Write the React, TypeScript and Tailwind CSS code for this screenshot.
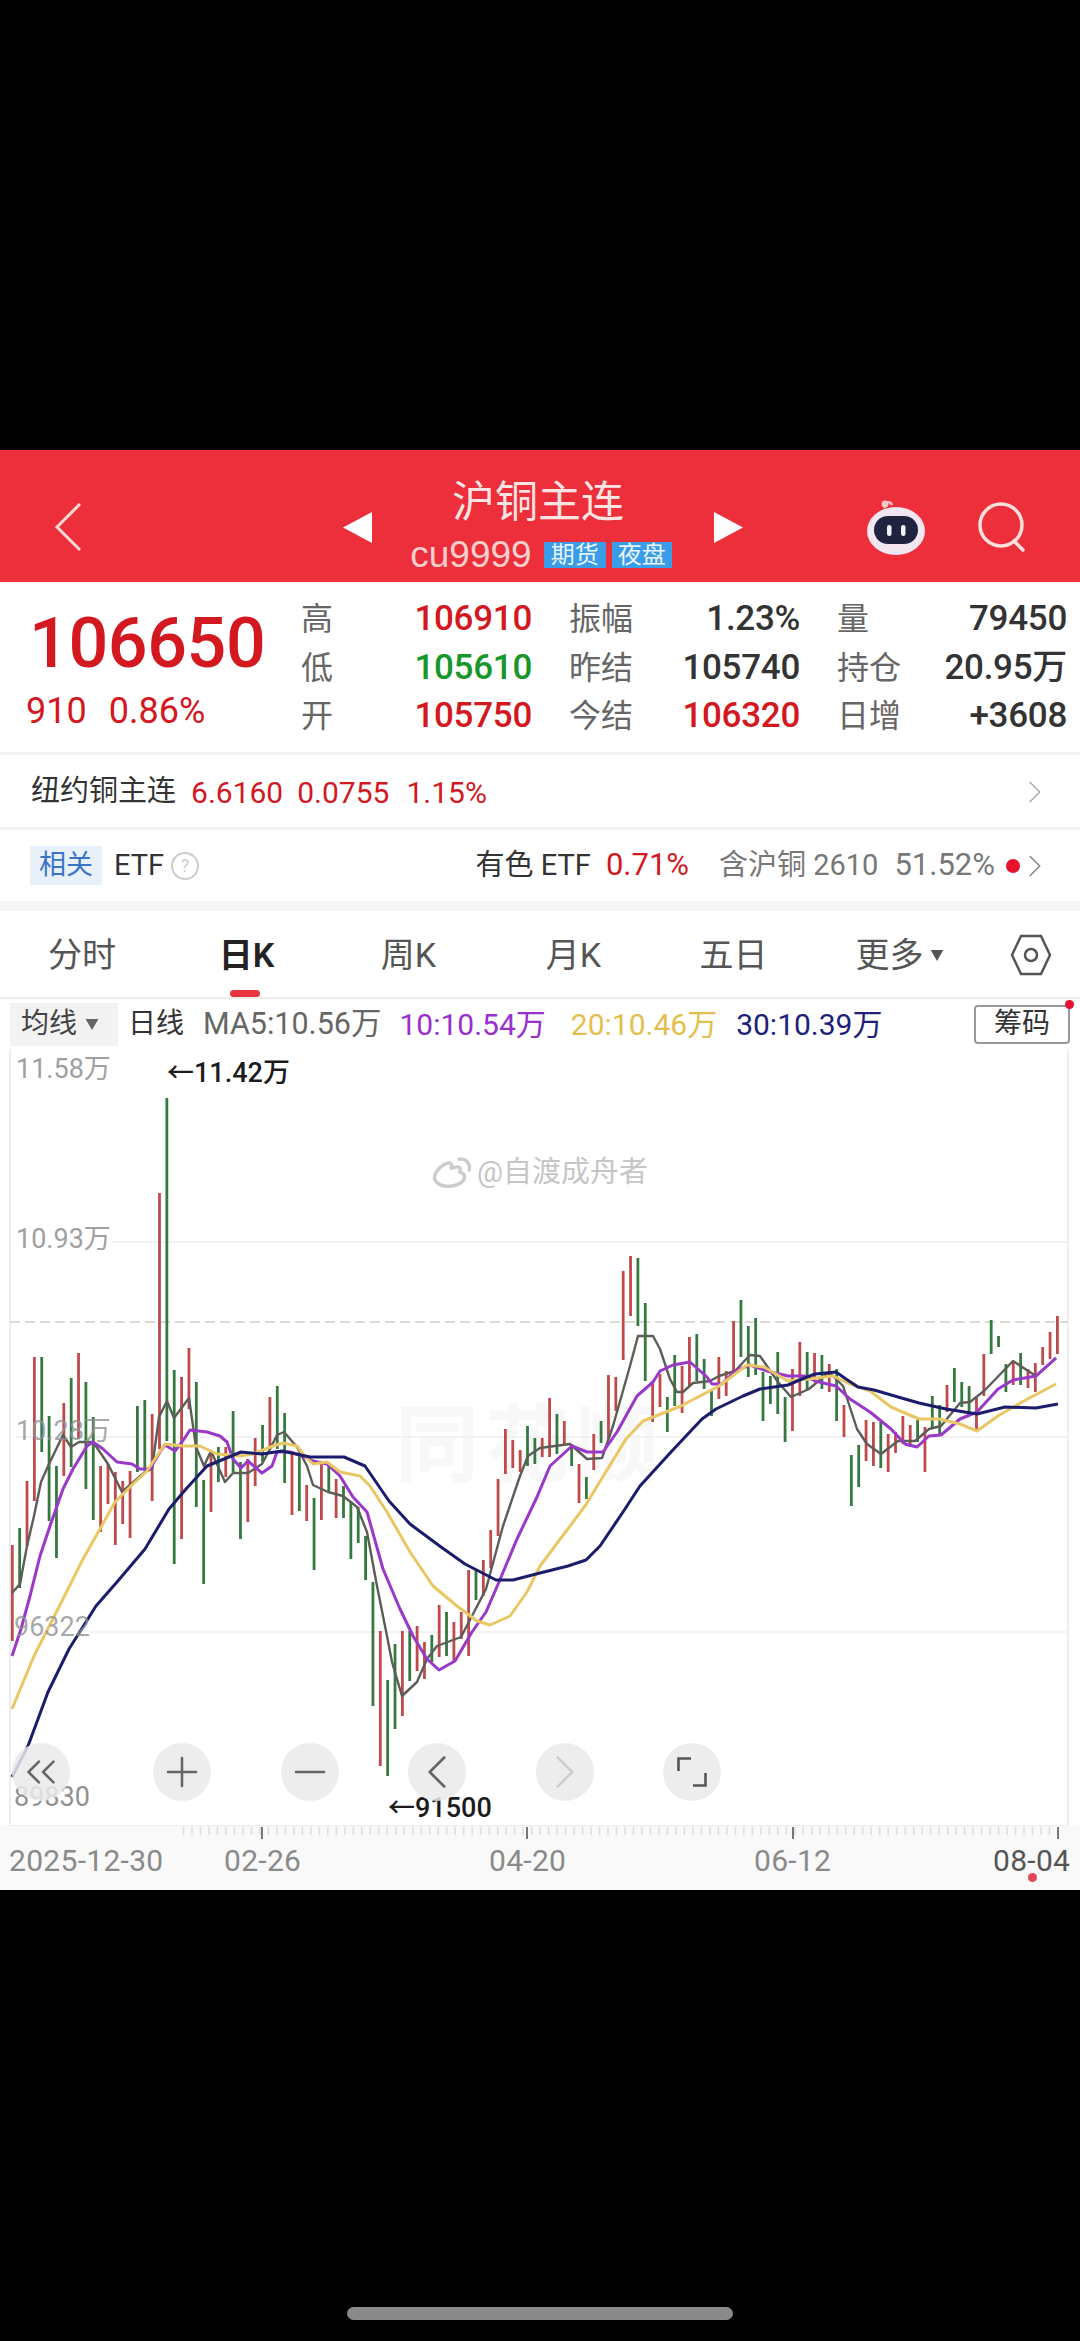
import React from "react";
import { ChevronLeft, ChevronRight, ChevronsLeft, Plus, Minus } from "lucide-react";
import { RiWeiboLine } from "react-icons/ri";

const font = "font-['Roboto','Noto_Sans_CJK_SC',sans-serif]";
const RED = "text-[#d3181f]";
const GREEN = "text-[#17962a]";
const DARK = "text-[#333333]";
const GRAY = "text-[#666666]";

// x = 12.3 + 7.36 * index, one [colour, top, bottom] for each day
const bars: Array<[string, number, number]> = [
  ["r", 1546, 1642], ["g", 1529, 1589], ["r", 1482, 1547], ["r", 1358, 1502], ["g", 1358, 1453],
  ["g", 1417, 1522], ["g", 1467, 1559], ["r", 1404, 1477], ["g", 1379, 1468], ["r", 1354, 1440],
  ["g", 1383, 1490], ["g", 1418, 1521], ["r", 1467, 1533], ["r", 1465, 1505], ["r", 1473, 1546],
  ["r", 1482, 1525], ["r", 1472, 1539], ["g", 1407, 1473], ["g", 1401, 1472], ["r", 1415, 1502],
  ["r", 1194, 1450], ["g", 1099, 1442], ["g", 1371, 1565], ["r", 1378, 1540], ["r", 1349, 1410],
  ["g", 1383, 1508], ["g", 1481, 1585], ["r", 1453, 1513], ["g", 1448, 1483], ["r", 1448, 1478],
  ["g", 1412, 1473], ["g", 1463, 1540], ["r", 1460, 1523], ["r", 1439, 1487], ["g", 1426, 1463],
  ["r", 1398, 1450], ["g", 1387, 1450], ["g", 1414, 1484], ["r", 1452, 1516], ["g", 1455, 1512],
  ["r", 1486, 1522], ["g", 1499, 1571], ["r", 1463, 1521], ["g", 1467, 1492], ["r", 1480, 1519],
  ["g", 1487, 1519], ["g", 1502, 1560], ["g", 1508, 1544], ["g", 1537, 1581], ["g", 1583, 1707],
  ["r", 1632, 1767], ["g", 1681, 1777], ["g", 1645, 1730], ["r", 1632, 1717], ["g", 1632, 1682],
  ["r", 1627, 1672], ["r", 1643, 1680], ["g", 1636, 1663], ["r", 1606, 1658], ["g", 1613, 1657],
  ["r", 1623, 1663], ["r", 1613, 1640], ["r", 1571, 1657], ["g", 1570, 1601], ["r", 1561, 1597],
  ["r", 1531, 1569], ["r", 1480, 1537], ["r", 1430, 1475], ["r", 1441, 1469], ["r", 1451, 1473],
  ["g", 1427, 1467], ["g", 1439, 1465], ["r", 1439, 1458], ["r", 1399, 1458], ["g", 1415, 1455],
  ["r", 1422, 1447], ["g", 1445, 1467], ["r", 1465, 1504], ["g", 1478, 1500], ["r", 1435, 1471],
  ["g", 1422, 1444], ["r", 1376, 1440], ["r", 1378, 1412], ["r", 1272, 1361], ["r", 1257, 1317],
  ["g", 1259, 1327], ["g", 1304, 1382], ["r", 1383, 1423], ["r", 1375, 1408], ["g", 1398, 1433],
  ["g", 1356, 1407], ["r", 1367, 1414], ["r", 1338, 1387], ["g", 1335, 1382], ["g", 1360, 1390],
  ["g", 1390, 1417], ["r", 1358, 1400], ["r", 1372, 1397], ["r", 1322, 1373], ["g", 1301, 1358],
  ["g", 1327, 1378], ["g", 1319, 1376], ["g", 1373, 1422], ["g", 1377, 1405], ["g", 1353, 1415],
  ["g", 1398, 1443], ["r", 1370, 1432], ["r", 1343, 1397], ["g", 1353, 1390], ["r", 1354, 1380],
  ["g", 1356, 1390], ["r", 1365, 1393], ["g", 1370, 1422], ["r", 1406, 1438], ["g", 1456, 1507],
  ["g", 1446, 1488], ["r", 1421, 1462], ["r", 1423, 1467], ["g", 1423, 1469], ["r", 1435, 1473],
  ["r", 1433, 1454], ["r", 1417, 1445], ["r", 1426, 1448], ["g", 1421, 1443], ["r", 1428, 1473],
  ["g", 1397, 1430], ["g", 1406, 1437], ["r", 1386, 1413], ["g", 1369, 1403], ["g", 1383, 1408],
  ["g", 1387, 1417], ["r", 1398, 1432], ["r", 1355, 1397], ["g", 1321, 1355], ["g", 1337, 1348],
  ["g", 1365, 1393], ["r", 1362, 1386], ["g", 1354, 1386], ["r", 1370, 1389], ["r", 1364, 1393],
  ["r", 1348, 1366], ["r", 1333, 1360], ["r", 1317, 1355],
];

const ma5 =
  "12,1594 20,1585 27,1547 34,1517 41,1483 49,1465 63,1436 71,1448 79,1443 93,1443 108,1465 122,1493 130,1486 145,1473 152,1470 159,1418 167,1402 174,1419 189,1399 196,1448 204,1467 211,1452 225,1483 233,1474 248,1474 262,1465 270,1450 277,1436 284,1433 297,1448 307,1467 313,1486 328,1493 343,1497 357,1508 367,1533 377,1587 387,1637 392,1663 402,1697 417,1683 427,1660 437,1647 461,1638 472,1617 486,1590 503,1527 520,1477 528,1457 540,1449 570,1445 587,1460 602,1459 613,1427 630,1367 638,1337 653,1337 660,1350 670,1380 677,1393 683,1393 693,1384 710,1382 719,1377 735,1372 750,1356 760,1357 778,1383 791,1398 809,1390 829,1373 843,1387 857,1430 867,1445 881,1455 898,1442 915,1442 929,1430 941,1427 960,1404 970,1403 984,1392 1013,1362 1036,1377 1056,1359";
const ma10 =
  "12,1657 21,1630 30,1597 40,1557 50,1527 63,1490 73,1470 87,1447 93,1443 103,1450 117,1463 132,1465 140,1470 150,1470 160,1453 165,1446 175,1452 182,1443 190,1431 207,1433 220,1437 227,1443 233,1460 241,1469 248,1462 262,1474 272,1467 277,1453 290,1453 303,1457 313,1462 327,1465 340,1477 353,1498 367,1513 383,1570 400,1610 413,1637 427,1660 439,1671 455,1662 472,1633 486,1613 499,1583 517,1540 537,1498 550,1467 572,1447 587,1453 603,1453 617,1433 637,1397 653,1383 660,1372 673,1366 690,1363 707,1378 712,1385 722,1385 735,1372 750,1366 767,1372 788,1377 805,1377 815,1382 836,1387 850,1400 870,1413 891,1430 905,1445 917,1448 929,1437 941,1436 960,1420 977,1413 998,1390 1013,1381 1036,1377 1056,1359";
const ma20 =
  "12,1710 34,1657 63,1600 83,1560 100,1530 115,1503 133,1485 147,1472 157,1457 165,1445 183,1447 200,1447 217,1455 240,1457 253,1455 273,1447 283,1444 297,1447 303,1455 313,1465 327,1463 340,1473 360,1477 370,1487 387,1513 410,1553 433,1587 457,1607 477,1622 490,1626 510,1617 527,1593 540,1567 585,1507 626,1440 643,1422 681,1407 719,1387 747,1366 764,1368 788,1382 809,1380 833,1377 850,1385 870,1392 891,1408 919,1420 939,1420 960,1425 977,1432 998,1417 1022,1403 1056,1385";
const ma30 =
  "12,1778 28,1747 48,1693 69,1650 96,1607 117,1583 145,1550 169,1510 186,1490 207,1467 241,1453 262,1455 282,1452 310,1458 344,1458 365,1467 389,1502 410,1525 441,1548 465,1565 496,1581 513,1581 540,1574 568,1567 586,1561 600,1547 623,1513 640,1487 671,1453 702,1420 716,1410 743,1397 760,1390 788,1386 802,1380 815,1375 836,1373 846,1380 858,1388 874,1391 898,1398 919,1404 946,1410 977,1415 1005,1408 1036,1409 1058,1405";

const ticks = Array.from({ length: 104 }, (_, i) => 1058 - i * 8.49);

const StatCell = ({ label, value, color }: { label: string; value: string; color: string }) => (
  <div className="flex items-center justify-between">
    <span className={`text-[32px] ${GRAY}`}>{label}</span>
    <span className={`text-[35px] font-medium tracking-[-0.3px] ${color}`}>{value}</span>
  </div>
);

const Stats = () => (
  <div className="flex h-[170px] bg-white">
    <div className="flex w-[301px] flex-col pl-[26px] pt-[13px]">
      <span className={`pl-[3px] text-[70px] leading-[96px] font-medium tracking-[-0.4px] ${RED}`}>106650</span>
      <div className={`mt-[-2px] flex gap-[22px] text-[36px] leading-[44px] ${RED}`}>
        <span>910</span>
        <span>0.86%</span>
      </div>
    </div>
    <div className="grid h-[146px] grid-cols-[231px_231px_230px] gap-x-[37px] pt-[13px] auto-rows-[48.5px]">
      <StatCell label="高" value="106910" color={RED} />
      <StatCell label="振幅" value="1.23%" color={DARK} />
      <StatCell label="量" value="79450" color={DARK} />
      <StatCell label="低" value="105610" color={GREEN} />
      <StatCell label="昨结" value="105740" color={DARK} />
      <StatCell label="持仓" value="20.95万" color={DARK} />
      <StatCell label="开" value="105750" color={RED} />
      <StatCell label="今结" value="106320" color={RED} />
      <StatCell label="日增" value="+3608" color={DARK} />
    </div>
  </div>
);

const Header = () => (
  <div className="grid h-[132px] grid-cols-[343px_29px_342px_29px_1fr] items-center bg-[#ec2f3b] pt-[22px] text-white">
    <svg viewBox="0 0 27 48" className="ml-[54px] h-[48px] w-[27px]" fill="none" stroke="#fbd9d6" strokeWidth="3">
      <path d="M26 1 3 24l23 23" />
    </svg>
    <svg viewBox="0 0 29 31" className="h-[31px] w-[29px]" fill="#ffffff">
      <polygon points="29,0 29,31 0,15.5" />
    </svg>
    <div className="flex flex-col items-center pr-[10px] pt-[3px]">
      <span className="text-[43px] leading-[40px] text-[#fde4e2]">沪铜主连</span>
      <div className="ml-[6px] mt-[13px] flex h-[40px] items-center gap-[6px]">
        <span className="mr-[6px] font-['Liberation_Sans',sans-serif] text-[37px] leading-[30px] text-[#f8cfcd]">cu9999</span>
        <span className="flex h-[26px] w-[62px] items-center justify-center bg-[#3a9be6] text-[24px] text-[#e9f5ff]">期货</span>
        <span className="flex h-[26px] w-[60px] items-center justify-center bg-[#3a9be6] text-[24px] text-[#e9f5ff]">夜盘</span>
      </div>
    </div>
    <svg viewBox="0 0 29 31" className="h-[31px] w-[29px]" fill="#ffffff">
      <polygon points="0,0 0,31 29,15.5" />
    </svg>
    <div className="flex items-center pl-[123px]">
      <svg viewBox="0 0 60 56" className="h-[56px] w-[60px]">
        <path d="M19 9c-3-6 5-8 7-3" fill="none" stroke="#f8c7c4" strokeWidth="2.5" />
        <circle cx="19" cy="5" r="3.5" fill="#f8c7c4" />
        <ellipse cx="30" cy="32" rx="29" ry="24" fill="#f3e6f0" />
        <rect x="8" y="17" width="44" height="28" rx="14" fill="#20233f" />
        <rect x="21" y="26" width="4.5" height="11" rx="2.2" fill="#f1f3fa" />
        <rect x="35" y="26" width="4.5" height="11" rx="2.2" fill="#f1f3fa" />
      </svg>
      <svg viewBox="0 0 50 50" className="ml-[51px] h-[50px] w-[50px]" fill="none" stroke="#fde0dc" strokeWidth="3.5">
        <circle cx="24" cy="23" r="21" />
        <path d="m37 39 9 9" strokeLinecap="round" />
      </svg>
    </div>
  </div>
);

const Rows = () => (
  <>
    <div className="flex h-[75px] items-center justify-between border-t-[3px] border-[#f3f3f3] bg-white pl-[31px] pr-[26px] pt-[2px]">
      <div className="flex items-center text-[30px]">
        <span className={`mr-[15px] text-[29px] ${DARK}`}>纽约铜主连</span>
        <span className={`mr-[14px] ${RED}`}>6.6160</span>
        <span className={`mr-[17px] ${RED}`}>0.0755</span>
        <span className={RED}>1.15%</span>
      </div>
      <ChevronRight className="h-[38px] w-[38px] text-[#aaaaaa]" strokeWidth={1} />
    </div>
    <div className="flex h-[74px] items-center justify-between border-t-[3px] border-[#f3f3f3] bg-white pl-[30px] pr-[26px]">
      <div className="flex items-center">
        <span className="flex h-[39px] w-[72px] items-center justify-center bg-[#e8f0fa] text-[27px] text-[#3a74c9]">相关</span>
        <span className={`ml-[12px] text-[29px] ${DARK}`}>ETF</span>
        <span className="ml-[7px] flex h-[28px] w-[28px] items-center justify-center rounded-full border-2 border-[#cccccc] text-[18px] text-[#cccccc]">?</span>
      </div>
      <div className="flex items-center text-[29px]">
        <span className={`mr-[15px] ${DARK}`}>有色 ETF</span>
        <span className={`mr-[30px] text-[31px] ${RED}`}>0.71%</span>
        <span className="mr-[16px] text-[#777777]">含沪铜 2610</span>
        <span className="text-[31px] text-[#777777]">51.52%</span>
        <span className="ml-[11px] h-[14px] w-[14px] rounded-full bg-[#e8112d]" />
        <ChevronRight className="ml-[-4px] h-[38px] w-[38px] text-[#888888]" strokeWidth={1} />
      </div>
    </div>
    <div className="h-[10px] bg-[#f5f5f5]" />
  </>
);

const Tabs = () => (
  <div className="grid h-[88px] grid-cols-[164px_165px_159px_171px_149px_183px_80px] border-b-2 border-[#eeeeee] bg-white pt-[2px] text-[34px] text-[#555555]">
    <div className="flex items-center justify-center">分时</div>
    <div className="relative flex items-center justify-center font-semibold text-[#222222]">
      日K
      <span className="absolute bottom-0 left-[66px] h-[7px] w-[30px] rounded-full bg-[#e8343f]" />
    </div>
    <div className="flex items-center justify-center">周K</div>
    <div className="flex items-center justify-center">月K</div>
    <div className="flex items-center justify-center">五日</div>
    <div className="flex items-center justify-center gap-[6px]">
      更多
      <svg viewBox="0 0 16 14" className="h-[11px] w-[14px]" fill="#555555">
        <polygon points="0,0 16,0 8,14" />
      </svg>
    </div>
    <div className="flex items-center justify-center">
      <svg viewBox="0 0 42 42" className="h-[42px] w-[42px]" fill="none" stroke="#555555" strokeWidth="2.5">
        <polygon points="11,2 31,2 40,21 31,40 11,40 2,21" />
        <circle cx="21" cy="21" r="6" />
      </svg>
    </div>
  </div>
);

const MaRow = () => (
  <div className="relative flex h-[50px] items-center bg-white pl-[10px] pr-[10px] text-[30px]">
    <div className="flex h-[43px] w-[108px] items-center gap-[8px] bg-[#f2f2f2] pl-[11px] text-[28px] text-[#444444]">
      均线
      <svg viewBox="0 0 14 12" className="h-[11px] w-[14px]" fill="#666666">
        <polygon points="0,0 14,0 7,12" />
      </svg>
    </div>
    <span className={`ml-[10px] text-[28px] ${DARK}`}>日线</span>
    <span className="ml-[19px] text-[30.5px] text-[#666666]">MA5:10.56万</span>
    <span className="ml-[18px] text-[#9a2fd0]">10:10.54万</span>
    <span className="ml-[25px] text-[#e5bf4e]">20:10.46万</span>
    <span className="ml-[19px] text-[#1d1f7a]">30:10.39万</span>
    <span className="ml-auto flex h-[39px] w-[96px] items-center justify-center rounded-[4px] border-2 border-[#999999] text-[28px] text-[#333333]">筹码</span>
    <span className="absolute right-[6px] top-[1px] h-[9px] w-[9px] rounded-full bg-[#e8112d]" />
  </div>
);

const Round = ({ left, children }: { left: string; children: React.ReactNode }) => (
  <div className={`absolute top-[694px] flex h-[58px] w-[58px] items-center justify-center rounded-full bg-[#eaeaea]/85 ${left}`}>
    {children}
  </div>
);

const Chart = () => (
  <div className={`relative h-[777px] bg-white ${font}`}>
    <span className="absolute left-[395px] top-[335px] text-[84px] font-bold tracking-[6px] text-[#f8f8f8]">同花顺</span>

    <svg viewBox="0 1050 1080 777" className="absolute inset-0 h-[777px] w-[1080px]" fill="none">
      <path d="M10 1050V1827M1068 1050V1827M10 1827H1068" stroke="#eeeeee" strokeWidth="2" />
      <path d="M112 1243H1068M16 1438H1068M90 1633H1068" stroke="#eeeeee" strokeWidth="1.5" />
      <path d="M10 1323H1068" stroke="#cfcfc4" strokeWidth="1.5" strokeDasharray="10 5" />
      {bars.map(([c, top, bottom], i) => (
        <line
          key={i}
          x1={12.3 + 7.36 * i}
          x2={12.3 + 7.36 * i}
          y1={top}
          y2={bottom}
          stroke={c === "r" ? "#bf4a4c" : "#35793f"}
          strokeWidth="2.8"
        />
      ))}
      <polyline points={ma5} stroke="#5d5d58" strokeWidth="2.4" strokeLinejoin="round" />
      <polyline points={ma10} stroke="#9a38c9" strokeWidth="3" strokeLinejoin="round" />
      <polyline points={ma20} stroke="#eac765" strokeWidth="3" strokeLinejoin="round" />
      <polyline points={ma30} stroke="#1c1c6c" strokeWidth="3" strokeLinejoin="round" />
    </svg>

    <span className="absolute left-[16px] top-[2px] text-[27px] leading-[36px] text-[#a0a0a0]">11.58万</span>
    <span className="absolute left-[16px] top-[172px] text-[27px] leading-[36px] text-[#a0a0a0]">10.93万</span>
    <span className="absolute left-[16px] top-[364px] text-[27px] leading-[36px] text-[#909090]/80">10.28万</span>
    <span className="absolute left-[14px] top-[560px] text-[27px] leading-[36px] text-[#909090]/80">96322</span>
    <span className="absolute left-[14px] top-[730px] text-[27px] leading-[36px] text-[#909090]">89830</span>

    <span className="absolute left-[167px] top-[6px] text-[27px] leading-[36px] font-medium text-[#1c1c1c]">←11.42万</span>
    <span className="absolute left-[388px] top-[741px] text-[27px] leading-[36px] font-medium text-[#1c1c1c]">←91500</span>

    <div className="absolute left-[431px] top-[102px] flex items-center gap-[4px] text-[29px] text-[#c6c6c6]">
      <RiWeiboLine className="h-[42px] w-[42px] text-[#cccccc]" />
      @自渡成舟者
    </div>

    <Round left="left-[12px]">
      <ChevronsLeft className="h-[50px] w-[50px] shrink-0 text-[#666666]" strokeWidth={1.2} />
    </Round>
    <Round left="left-[153px]">
      <Plus className="h-[48px] w-[48px] shrink-0 text-[#666666]" strokeWidth={1.3} />
    </Round>
    <Round left="left-[281px]">
      <Minus className="h-[48px] w-[48px] shrink-0 text-[#666666]" strokeWidth={1.3} />
    </Round>
    <Round left="left-[408px]">
      <ChevronLeft className="h-[58px] w-[58px] shrink-0 text-[#666666]" strokeWidth={1.1} />
    </Round>
    <Round left="left-[536px]">
      <ChevronRight className="h-[58px] w-[58px] shrink-0 text-[#cfcfcf]" strokeWidth={1.1} />
    </Round>
    <Round left="left-[663px]">
      <svg viewBox="0 0 30 30" className="h-[30px] w-[30px]" fill="none" stroke="#555555" strokeWidth="2.6">
        <path d="M1.5 14V1.5H14M28.5 16V28.5H16" />
      </svg>
    </Round>
  </div>
);

const Axis = () => (
  <div className={`relative h-[64px] bg-[#f9f9f9] ${font}`}>
    <svg viewBox="0 0 1080 14" className="block h-[14px] w-[1080px]" fill="none">
      {ticks.map((x) => (
        <line key={x} x1={x} x2={x} y1="1" y2="9" stroke="#dddddd" strokeWidth="1.5" />
      ))}
      {[262, 527, 793, 1058].map((x) => (
        <line key={x} x1={x} x2={x} y1="1" y2="13" stroke="#777777" strokeWidth="2" />
      ))}
    </svg>
    <div className="flex h-[40px] items-center text-[30px] tracking-[0.3px] text-[#8a8a8a]">
      <span className="ml-[9px] w-[215px]">2025-12-30</span>
      <span className="w-[265px]">02-26</span>
      <span className="w-[265px]">04-20</span>
      <span className="w-[239px]">06-12</span>
      <span className="text-[#555555]">08-04</span>
    </div>
    <span className="absolute left-[1028px] top-[47px] h-[9px] w-[9px] rounded-full bg-[#e0485a]" />
  </div>
);

const App = () => (
  <div className={`flex h-[2341px] w-[1080px] flex-col overflow-hidden bg-black ${font}`}>
    <div className="h-[450px] shrink-0" />
    <Header />
    <Stats />
    <Rows />
    <Tabs />
    <MaRow />
    <Chart />
    <Axis />
    <div className="ml-[347px] mt-[417px] h-[13px] w-[386px] rounded-full bg-[#8a8a8a]" />
  </div>
);

export default App;
